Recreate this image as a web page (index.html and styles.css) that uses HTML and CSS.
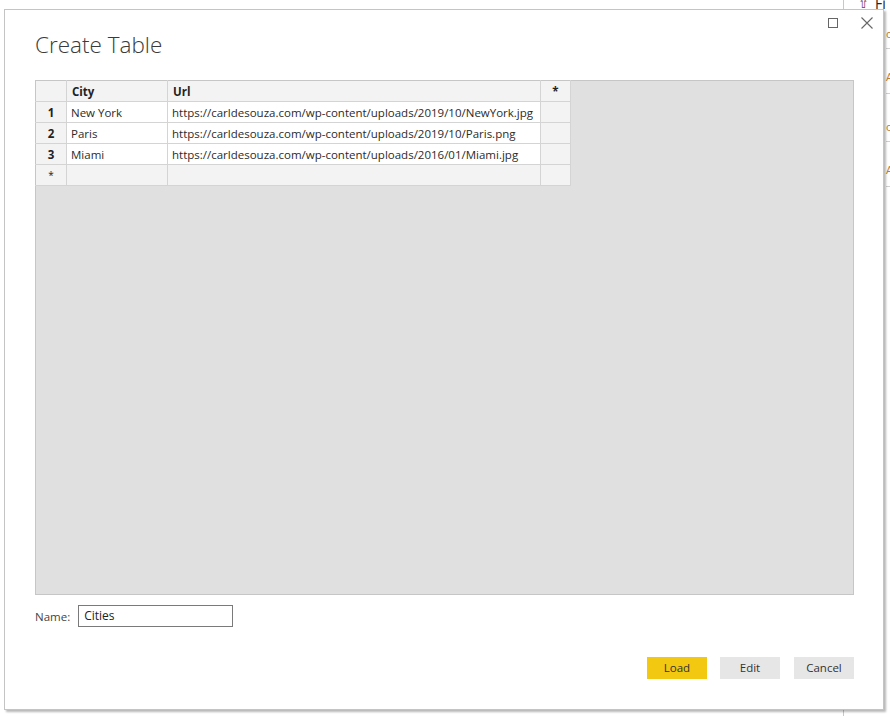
FILE: index.html
```html
<!DOCTYPE html>
<html>
<head>
<meta charset="utf-8">
<link rel="stylesheet" href="styles.css">
</head>
<body>
<div class="desktop">
  <div class="bgapp">
    <div class="bg-top"><span class="bg-icon">⇧</span><span class="bg-title">Fi</span></div>
    <div class="bg-strip">
      <div class="bg-row">o</div>
      <div class="bg-row">A</div>
      <div class="bg-row">o</div>
      <div class="bg-row">A</div>
    </div>
  </div>

  <div class="dialog">
    <div class="titlebar">
      <svg class="tb-icon" width="12" height="12" viewBox="0 0 12 12"><rect x="1.5" y="1.5" width="9" height="9" fill="none" stroke="#666" stroke-width="1"/></svg>
      <svg class="tb-icon close" width="14" height="14" viewBox="0 0 14 14"><path d="M1.5 1.5 L12.5 12.5 M12.5 1.5 L1.5 12.5" stroke="#666" stroke-width="1.1" fill="none"/></svg>
    </div>
    <h1 class="title">Create Table</h1>
    <div class="grid-area">
      <table class="grid">
        <thead>
          <tr><th class="num"></th><th class="city">City</th><th class="url">Url</th><th class="add">*</th></tr>
        </thead>
        <tbody>
          <tr><td class="num">1</td><td>New York</td><td>https://carldesouza.com/wp-content/uploads/2019/10/NewYork.jpg</td><td class="add"></td></tr>
          <tr><td class="num">2</td><td>Paris</td><td>https://carldesouza.com/wp-content/uploads/2019/10/Paris.png</td><td class="add"></td></tr>
          <tr><td class="num">3</td><td>Miami</td><td>https://carldesouza.com/wp-content/uploads/2016/01/Miami.jpg</td><td class="add"></td></tr>
          <tr class="newrow"><td class="num star">*</td><td></td><td></td><td class="add"></td></tr>
        </tbody>
      </table>
    </div>
    <div class="name-row">
      <label class="name-label">Name:</label>
      <div class="name-input">Cities</div>
    </div>
    <div class="buttons">
      <div class="btn primary">Load</div>
      <div class="btn">Edit</div>
      <div class="btn">Cancel</div>
    </div>
  </div>
</div>
</body>
</html>
```

FILE: styles.css
```css
html, body {
  margin: 0;
  padding: 0;
  background: #ffffff;
  font-family: "Open Sans", "Noto Sans", sans-serif;
}

.desktop {
  position: relative;
  width: 890px;
  height: 716px;
  overflow: hidden;
}

/* background application peeking out behind the dialog */
.bgapp {
  position: absolute;
  left: 843px;
  top: 0;
  width: 47px;
  height: 716px;
  border-left: 1px solid #c8c8c8;
  box-sizing: border-box;
}
.bg-top {
  position: absolute;
  left: 14px;
  top: -6px;
  font-size: 14px;
  color: #222;
  display: flex;
  gap: 6px;
}
.bg-icon { color: #7a2a6a; font-size: 13px; }
.bg-strip {
  position: absolute;
  left: 42px;
  top: 0;
  width: 8px;
  height: 716px;
}
.bg-row {
  position: absolute;
  left: 0;
  font-size: 11px;
  color: #c57a2a;
  border-bottom: 1px solid #d0d0d0;
  width: 8px;
  line-height: 14px;
}
.bg-row:nth-child(1) { top: 27px; height: 21px; }
.bg-row:nth-child(2) { top: 70px; height: 23px; }
.bg-row:nth-child(3) { top: 120px; height: 21px; }
.bg-row:nth-child(4) { top: 163px; height: 23px; }

.dialog {
  position: absolute;
  left: 4px;
  top: 9px;
  width: 880px;
  height: 701px;
  box-sizing: border-box;
  background: #ffffff;
  border: 1px solid #c4c4c4;
  box-shadow: 2px 2px 2px rgba(0, 0, 0, 0.28);
  padding: 0 30px 0 30px;
  display: flex;
  flex-direction: column;
}

.titlebar {
  position: absolute;
  top: 6px;
  right: 9px;
  display: flex;
  align-items: center;
  gap: 21px;
}
.tb-icon { display: block; }

.title {
  margin: 20px 0 0 0;
  font-size: 22.5px;
  font-weight: 300;
  color: #3a3a3a;
  line-height: 30px;
}

.grid-area {
  margin-top: 20px;
  width: 819px;
  height: 515px;
  box-sizing: border-box;
  background: #e0e0e0;
  border: 1px solid #c6c6c6;
}

.grid {
  border-collapse: collapse;
  font-size: 11.5px;
  color: #2b2b2b;
  margin: -1px 0 0 -1px;
}
.grid th, .grid td {
  box-sizing: border-box;
  border: 1px solid #d4d4d4;
  height: 21px;
  padding: 0 4px;
  text-align: left;
  white-space: nowrap;
}
.grid th {
  background: #f3f3f3;
  font-weight: 700;
  color: #222;
  border-top-color: #c6c6c6;
  padding-left: 5px;
}
.grid td { background: #ffffff; }
.grid .num {
  width: 31px;
  padding: 0;
  background: #f3f3f3;
  text-align: center;
  font-weight: 700;
  color: #222;
  border-left-color: #c6c6c6;
}
.grid .city { width: 101px; }
.grid .url { width: 373px; }
.grid .add {
  width: 30px;
  padding: 0;
  background: #f3f3f3;
  text-align: center;
}
.grid .newrow td { background: #f3f3f3; }
.grid .star { font-weight: 400; font-size: 10px; }

.name-row {
  margin-top: 10px;
  display: flex;
  align-items: center;
  gap: 8px;
  font-size: 11.5px;
}
.name-label { color: #444; }
.name-input {
  width: 155px;
  height: 22px;
  box-sizing: border-box;
  border: 1px solid #7a7a7a;
  padding: 0 5px;
  line-height: 20px;
  font-size: 12px;
  color: #222;
}

.buttons {
  margin-top: 30px;
  display: flex;
  justify-content: flex-end;
  gap: 14px;
  width: 819px;
}
.btn {
  width: 60px;
  height: 22px;
  line-height: 22px;
  text-align: center;
  font-size: 11.5px;
  background: #e6e6e6;
  color: #333;
}
.btn.primary { background: #f2c811; margin-right: -1px; }
```
